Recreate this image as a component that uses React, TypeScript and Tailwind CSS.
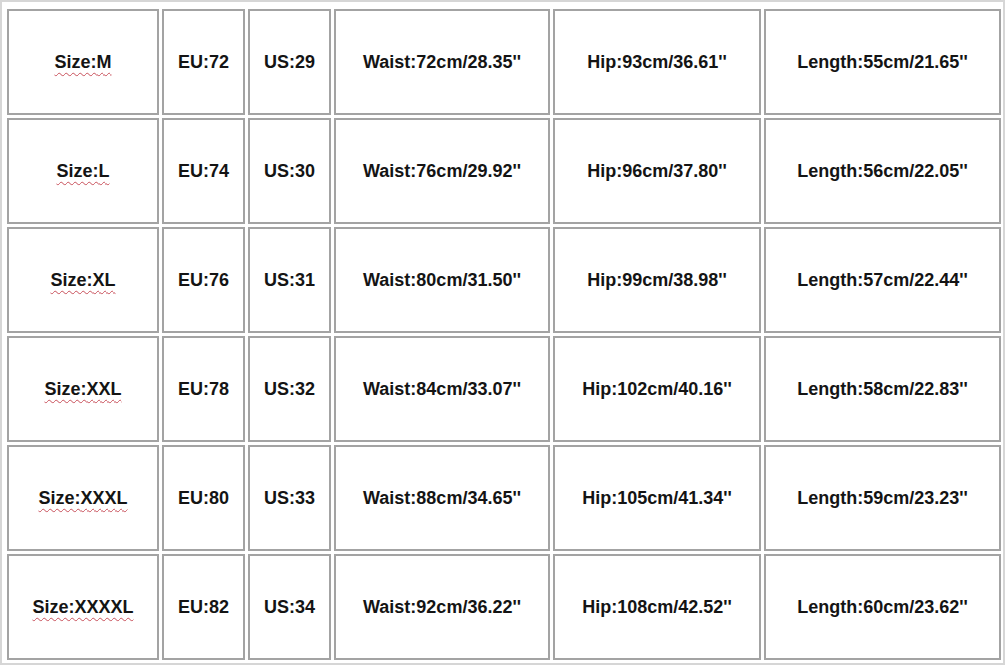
const rows = [
  ['M', '72', '29', '72cm/28.35', '93cm/36.61', '55cm/21.65'],
  ['L', '74', '30', '76cm/29.92', '96cm/37.80', '56cm/22.05'],
  ['XL', '76', '31', '80cm/31.50', '99cm/38.98', '57cm/22.44'],
  ['XXL', '78', '32', '84cm/33.07', '102cm/40.16', '58cm/22.83'],
  ['XXXL', '80', '33', '88cm/34.65', '105cm/41.34', '59cm/23.23'],
  ['XXXXL', '82', '34', '92cm/36.22', '108cm/42.52', '60cm/23.62'],
];

function Cell({ children }: { children: React.ReactNode }) {
  return (
    <div className="flex items-center justify-center border-2 border-[#a3a3a3] bg-white">
      {children}
    </div>
  );
}

export default function App() {
  return (
    <div className="w-[1006px] h-[666px] bg-white overflow-hidden">
      <div
        className="w-[1005px] border-2 border-[#d6d6d6] pt-[7px] pl-[5px] pr-[2px] pb-[3px] text-[18px] font-bold text-[#141414]"
        style={{ fontFamily: '"Liberation Sans", Arial, sans-serif' }}
      >
        <div className="grid grid-cols-[152px_83px_83px_216px_208px_237px] auto-rows-[106px] gap-[3px]">
          {rows.map((r) => (
            <div key={r[0]} className="contents">
              <Cell>
                <span className="underline decoration-wavy decoration-[#c8505a] decoration-1 underline-offset-[4px]">
                  Size:{r[0]}
                </span>
              </Cell>
              <Cell>EU:{r[1]}</Cell>
              <Cell>US:{r[2]}</Cell>
              <Cell>Waist:{r[3]}''</Cell>
              <Cell>Hip:{r[4]}''</Cell>
              <Cell>Length:{r[5]}''</Cell>
            </div>
          ))}
        </div>
      </div>
    </div>
  );
}
